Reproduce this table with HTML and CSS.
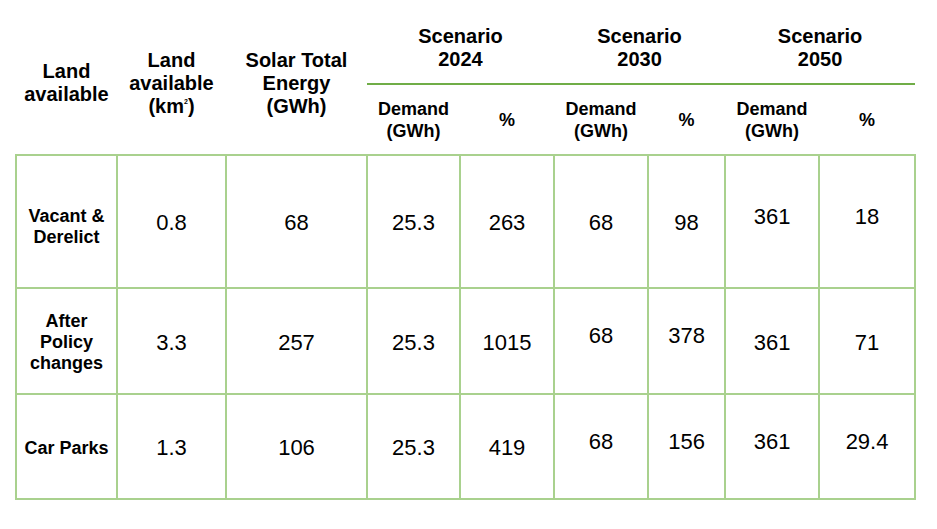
FILE: index.html
```html
<!DOCTYPE html>
<html lang="en">
<head>
<meta charset="utf-8">
<title>Solar land availability scenarios</title>
<link rel="stylesheet" href="styles.css">
</head>
<body>
<div class="page">
  <table class="grid">
    <colgroup>
      <col class="c-type">
      <col class="c-land">
      <col class="c-solar">
      <col class="c-d24">
      <col class="c-p24">
      <col class="c-d30">
      <col class="c-p30">
      <col class="c-d50">
      <col class="c-p50">
    </colgroup>
    <thead>
      <tr class="head-top">
        <th rowspan="2" class="main">Land<br>available</th>
        <th rowspan="2" class="main">Land<br>available<br>(km<sup>2</sup>)</th>
        <th rowspan="2" class="main">Solar Total<br>Energy<br>(GWh)</th>
        <th colspan="2" class="scen">Scenario<br>2024</th>
        <th colspan="2" class="scen">Scenario<br>2030</th>
        <th colspan="2" class="scen">Scenario<br>2050</th>
      </tr>
      <tr class="head-sub">
        <th class="sub">Demand<br>(GWh)</th>
        <th class="sub">%</th>
        <th class="sub">Demand<br>(GWh)</th>
        <th class="sub">%</th>
        <th class="sub">Demand<br>(GWh)</th>
        <th class="sub">%</th>
      </tr>
    </thead>
    <tbody>
      <tr class="row-1">
        <td class="lbl low">Vacant &amp;<br>Derelict</td>
        <td>0.8</td>
        <td>68</td>
        <td>25.3</td>
        <td>263</td>
        <td>68</td>
        <td>98</td>
        <td class="up">361</td>
        <td class="up">18</td>
      </tr>
      <tr class="row-2">
        <td class="lbl">After<br>Policy<br>changes</td>
        <td>3.3</td>
        <td>257</td>
        <td>25.3</td>
        <td>1015</td>
        <td class="up">68</td>
        <td class="up">378</td>
        <td>361</td>
        <td>71</td>
      </tr>
      <tr class="row-3">
        <td class="lbl">Car Parks</td>
        <td>1.3</td>
        <td>106</td>
        <td>25.3</td>
        <td>419</td>
        <td class="up">68</td>
        <td class="up">156</td>
        <td class="up">361</td>
        <td class="up">29.4</td>
      </tr>
    </tbody>
  </table>
</div>
</body>
</html>
```

FILE: styles.css
```css
html, body {
  margin: 0;
  padding: 0;
  background: #ffffff;
}

body {
  font-family: "Liberation Sans", Arial, sans-serif;
  color: #000000;
}

.page {
  padding: 12px 0 0 15px;
}

.grid {
  border-collapse: collapse;
  table-layout: fixed;
  width: 900px;
}

.c-type { width: 101px; }
.c-land { width: 109px; }
.c-solar { width: 141px; }
.c-d24 { width: 93px; }
.c-p24 { width: 94px; }
.c-d30 { width: 94px; }
.c-p30 { width: 77px; }
.c-d50 { width: 94px; }
.c-p50 { width: 96px; }

.grid th {
  padding: 0;
  border: none;
  font-weight: bold;
  text-align: center;
  vertical-align: middle;
}

.head-top th {
  height: 71px;
}

.head-sub th {
  height: 69px;
}

.main,
.scen {
  font-size: 20px;
  line-height: 23px;
}

.main sup {
  font-size: 7px;
  line-height: 0;
  vertical-align: 9px;
}

.scen {
  border-bottom: 2px solid #70ad47 !important;
}

.sub {
  font-size: 18px;
  line-height: 22px;
}

.grid td {
  border: 2px solid #a9d18e;
  padding: 3px 0 0 0;
  text-align: center;
  vertical-align: middle;
  font-size: 22px;
  line-height: 26px;
}

.row-1 { height: 133px; }
.row-2 { height: 106px; }
.row-3 { height: 105px; }

.grid td.lbl {
  font-size: 18px;
  line-height: 21px;
  font-weight: bold;
}

.grid td.low {
  padding-top: 11px;
}

.grid td.up {
  padding-top: 0;
  padding-bottom: 10px;
}
```
